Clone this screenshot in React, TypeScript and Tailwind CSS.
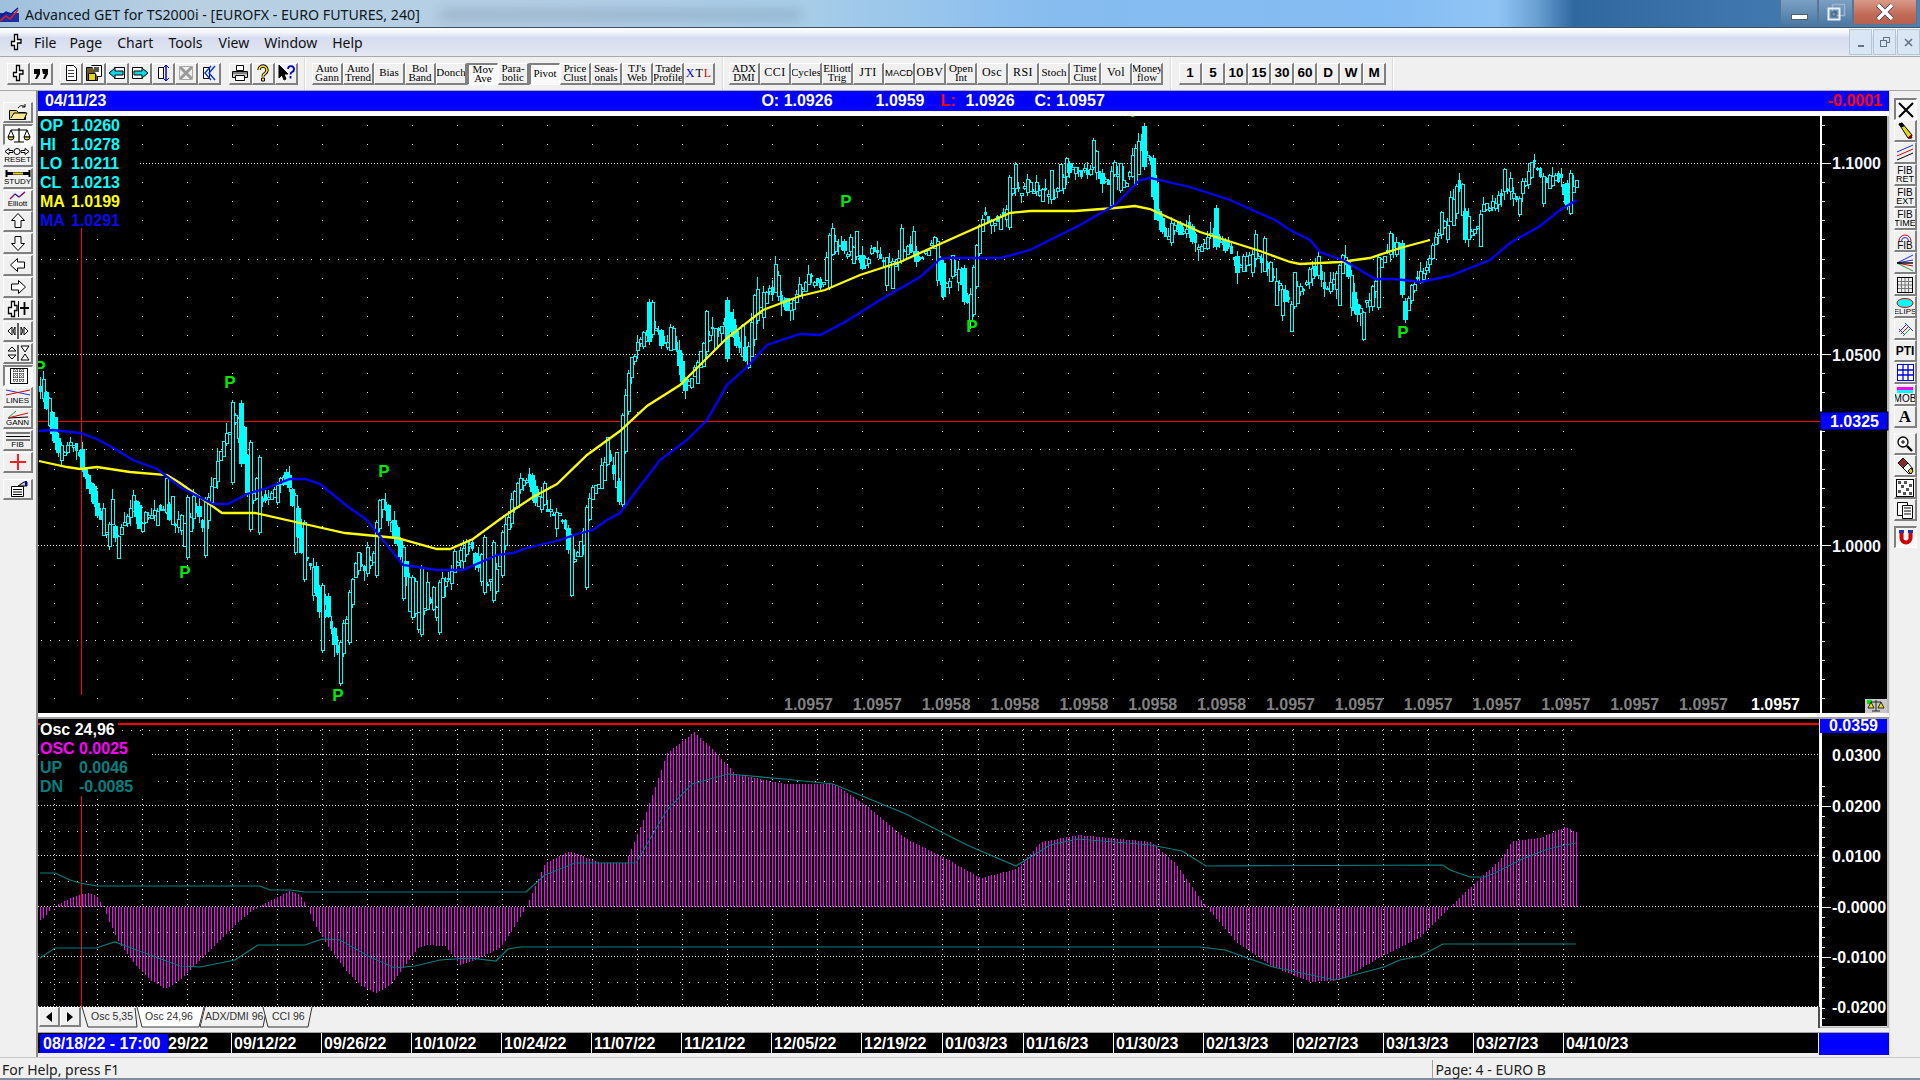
import React from "react";

type P = [number, number];

const K: P[] = [[40,385],[46,398],[51,415],[53,422],[55,437],[61,452],[71,443],[80,450],[83,462],[88,482],[93,493],[100,515],[106,540],[110,517],[118,537],[126,520],[136,498],[141,533],[146,517],[158,510],[166,503],[175,530],[181,515],[186,533],[196,497],[204,533],[211,490],[215,477],[223,443],[231,427],[241,413],[245,457],[250,497],[258,497],[268,500],[276,487],[286,473],[295,507],[303,550],[315,570],[321,617],[326,600],[331,627],[340,660],[343,627],[348,617],[353,577],[360,557],[366,570],[375,550],[381,497],[386,510],[395,530],[405,563],[411,600],[421,613],[430,600],[438,610],[443,583],[451,577],[461,557],[468,540],[476,557],[483,583],[491,580],[501,557],[513,500],[520,480],[530,473],[537,507],[540,493],[548,513],[558,513],[567,525],[573,567],[585,533],[592,493],[602,480],[607,457],[615,470],[620,493],[628,380],[633,358],[647,330],[657,327],[665,347],[677,348],[685,390],[693,380],[700,360],[710,330],[718,333],[728,317],[737,340],[748,360],[753,327],[767,290],[780,297],[790,307],[800,289],[810,279],[818,283],[825,283],[830,249],[838,243],[845,249],[855,254],[865,266],[873,249],[883,261],[893,268],[900,258],[908,248],[920,259],[927,249],[935,243],[942,279],[947,286],[953,271],[963,286],[970,309],[975,273],[978,243],[983,216],[990,223],[1000,216],[1007,213],[1010,196],[1017,189],[1027,189],[1035,188],[1040,196],[1045,191],[1053,198],[1060,188],[1068,163],[1073,173],[1080,171],[1088,173],[1093,163],[1098,173],[1108,183],[1115,171],[1123,188],[1128,179],[1133,163],[1142,133],[1143,149],[1152,163],[1155,189],[1158,216],[1162,229],[1168,239],[1177,226],[1182,233],[1187,223],[1195,243],[1202,253],[1208,236],[1215,233],[1225,246],[1233,253],[1240,271],[1245,259],[1260,258],[1268,271],[1277,283],[1283,291],[1288,303],[1295,299],[1298,286],[1307,284],[1312,266],[1320,276],[1327,286],[1333,286],[1340,269],[1343,256],[1348,263],[1352,293],[1357,311],[1363,308],[1372,301],[1377,276],[1383,256],[1388,249],[1393,246],[1402,243],[1405,316],[1412,286],[1420,276],[1427,269],[1432,249],[1438,229],[1447,226],[1453,221],[1457,184],[1462,184],[1465,226],[1470,234],[1477,229],[1482,213],[1488,206],[1495,204],[1502,193],[1507,183],[1510,193],[1518,196],[1523,188],[1528,176],[1533,161],[1538,169],[1543,179],[1548,184],[1552,176],[1558,178],[1563,181],[1567,196],[1568,208],[1573,186],[1577,180]];

// [x, top, bottom, filled]
const SPIKES: [number, number, number, number][] = [[186,495,560,0],[204,497,558,0],[231,400,485,0],[241,400,467,1],[250,440,532,0],[258,455,535,0],[294,493,555,0],[303,520,582,0],[321,583,653,0],[340,640,686,0],[348,590,645,0],[375,520,578,0],[402,545,601,0],[411,575,620,0],[420,565,637,0],[438,580,635,0],[483,535,595,0],[492,540,603,0],[501,530,578,0],[585,505,590,0],[622,413,507,0],[619,478,505,1],[648,299,345,1],[727,297,362,1],[828,233,290,0],[943,260,300,1],[963,265,305,1],[972,265,317,0],[1008,175,230,0],[1143,123,170,1],[1153,155,200,1],[1215,205,250,1],[1377,255,310,0],[1402,240,298,1],[1405,298,323,1],[1465,208,243,1],[1518,196,217,0],[1567,180,210,1]];

const YELLOW: P[] = [[39,461],[67,467],[80,469],[97,467],[130,472],[167,475],[180,483],[222,513],[255,513],[300,523],[345,533],[397,538],[437,549],[450,549],[473,539],[503,517],[533,497],[557,484],[587,455],[620,431],[647,406],[680,385],[700,365],[727,338],[763,310],[800,296],[825,290],[860,275],[900,262],[960,235],[1010,213],[1030,211],[1075,211],[1115,208],[1135,206],[1150,209],[1200,232],[1260,251],[1290,262],[1300,264],[1340,262],[1370,258],[1400,248],[1430,240]];
const BLUE: P[] = [[39,431],[53,430],[80,433],[97,439],[115,449],[133,460],[157,469],[170,479],[182,488],[213,504],[228,504],[247,494],[267,488],[290,479],[305,479],[320,484],[347,506],[367,520],[403,565],[437,570],[463,570],[497,555],[513,553],[527,548],[560,540],[577,534],[593,530],[607,520],[620,513],[637,490],[660,460],[687,440],[707,420],[727,385],[747,367],[767,345],[800,334],[820,335],[845,322],[880,300],[920,277],[940,259],[945,258],[1000,258],[1030,250],[1080,225],[1115,205],[1140,180],[1150,178],[1190,187],[1230,200],[1275,220],[1290,230],[1310,240],[1320,252],[1345,261],[1375,279],[1395,279],[1420,282],[1450,276],[1490,260],[1510,243],[1540,226],[1560,210],[1577,200]];

const OSC: P[] = [[40,920],[46,915],[52,907],[60,903],[70,898],[81,894],[90,893],[97,897],[102,905],[104,907],[108,920],[120,945],[135,965],[150,980],[165,989],[180,980],[195,965],[215,945],[235,925],[250,912],[262,905],[275,898],[290,891],[300,895],[307,907],[315,925],[330,950],[345,970],[360,985],[376,993],[390,985],[405,965],[418,948],[427,945],[445,946],[460,965],[475,960],[500,948],[512,930],[526,907],[545,863],[569,851],[600,863],[625,863],[643,820],[667,753],[694,732],[716,753],[735,774],[784,784],[833,784],[869,808],[906,839],[943,857],[980,878],[1016,869],[1041,842],[1078,835],[1151,842],[1175,863],[1206,907],[1237,943],[1273,967],[1310,982],[1341,980],[1384,955],[1420,937],[1445,912],[1457,900],[1482,876],[1500,860],[1512,841],[1540,838],[1565,827],[1576,832]];
const UP: P[] = [[40,873],[55,873],[70,880],[80,883],[97,886],[260,886],[270,890],[290,890],[305,892],[526,892],[545,875],[575,863],[636,863],[667,810],[692,784],[728,774],[784,779],[833,784],[906,814],[967,845],[1016,866],[1050,845],[1078,839],[1151,845],[1182,851],[1206,866],[1443,865],[1450,870],[1470,877],[1485,877],[1495,873],[1520,860],[1545,850],[1565,845],[1576,843]];
const DN: P[] = [[40,958],[55,948],[97,948],[105,945],[115,942],[150,955],[180,966],[200,967],[235,960],[258,945],[305,945],[322,939],[340,940],[370,957],[395,968],[415,966],[440,960],[470,958],[496,961],[508,949],[520,947],[1200,947],[1225,950],[1273,967],[1335,980],[1384,967],[1400,960],[1420,956],[1443,944],[1576,944]];

const GRIDX: number[] = [54];
for (let x = 97; x <= 906; x += 45) GRIDX.push(x);
GRIDX.push(942, 978);
for (let x = 1023; x <= 1563; x += 45) GRIDX.push(x);

function lerp(pts: P[], x: number): number {
  if (x <= pts[0][0]) return pts[0][1];
  for (let i = 1; i < pts.length; i++) {
    if (x <= pts[i][0]) {
      const [a, b] = pts[i - 1];
      const [c, d] = pts[i];
      return c === a ? d : b + ((d - b) * (x - a)) / (c - a);
    }
  }
  return pts[pts.length - 1][1];
}
const line = (pts: P[]) => pts.map((p) => p.join(",")).join(" ");

function buildCandles() {
  let seed = 20230411;
  const r = () => {
    seed = (seed * 1664525 + 1013904223) >>> 0;
    return seed / 4294967296;
  };
  let wick = "";
  let solid = "";
  let hollow = "";
  for (let x = 40; x <= 1576; x += 3) {
    const o = lerp(K, x - 2) + (r() - 0.5) * 11;
    const c = lerp(K, x + 2) + (r() - 0.5) * 11;
    let top = Math.round(Math.min(o, c));
    let bot = Math.round(Math.max(o, c));
    if (bot - top < 2) bot = top + 2;
    let filled = c > o;
    if (r() < 0.24) {
      const ext = 6 + Math.round(r() * 20);
      if (r() < 0.5) top -= ext;
      else bot += ext;
      filled = false;
    }
    let wt = Math.round(top - r() * r() * 14);
    let wb = Math.round(bot + r() * r() * 14);
    const s = SPIKES.find((q) => Math.abs(q[0] - x) <= 1);
    if (s) {
      wt = s[1];
      wb = s[2];
      filled = s[3] === 1;
      top = s[3] === 1 ? s[1] + 3 : s[1] + 2;
      bot = s[2] - 3;
    }
    wick += `M${x}.5 ${wt}V${wb}`;
    if (filled) {
      const big = bot - top >= 10;
      solid += big ? `M${x - 2} ${top}h5v${bot - top}h-5z` : `M${x - 1} ${top}h3v${bot - top}h-3z`;
    } else hollow += `M${x - 1}.5 ${top}.5h3v${bot - top}h-3z`;
  }
  return { wick, solid, hollow };
}
const CANDLES = buildCandles();

function oscBars() {
  let d = "";
  for (let x = 40; x <= 1576; x += 3) {
    const y = Math.round(lerp(OSC, x));
    d += `M${x}.5 907V${y}`;
  }
  return d;
}
const OSC_BARS = oscBars();

const dots = (xs: number[], y: number) => xs.map((x) => `M${x} ${y}h1`).join("");
function priceGrid() {
  let d = "";
  for (let k = -2; k <= 28; k++) {
    if (k % 5 === 0) continue;
    d += dots(GRIDX, Math.round(163 + k * 19.12));
  }
  return d;
}
const PRICE_GRID = priceGrid();

const DATES: [number, string][] = [[231,"09/12/22"],[321,"09/26/22"],[411,"10/10/22"],[501,"10/24/22"],[591,"11/07/22"],[681,"11/21/22"],[771,"12/05/22"],[861,"12/19/22"],[942,"01/03/23"],[1023,"01/16/23"],[1113,"01/30/23"],[1203,"02/13/23"],[1293,"02/27/23"],[1383,"03/13/23"],[1473,"03/27/23"],[1563,"04/10/23"]];
const CLOSES = ["1.0957","1.0957","1.0958","1.0958","1.0958","1.0958","1.0958","1.0957","1.0957","1.0957","1.0957","1.0957","1.0957","1.0957"];
const PIVOTS: P[] = [[40,367],[185,572],[230,382],[384,471],[338,695],[846,201],[972,326],[1136,111],[1403,332]];

function Btn({ w = "w-[31px]", h = "h-[22px]", pressed = false, children }: { w?: string; h?: string; pressed?: boolean; children?: React.ReactNode }) {
  return (
    <div className={`${w} ${h} shrink-0 flex items-center justify-center overflow-hidden text-black ${pressed ? "bg-[#f9f9f9] border-t-2 border-l-2 border-b border-r border-t-[#808080] border-l-[#808080] border-b-white border-r-white" : "bg-[#f0f0f0] border-t border-l border-b-2 border-r-2 border-t-white border-l-white border-b-[#808080] border-r-[#808080]"}`}>
      {children}
    </div>
  );
}

function Label({ a, b, cls = "" }: { a: string; b?: string; cls?: string }) {
  return (
    <div className={`font-['Liberation_Serif'] text-[11px] leading-[9.500px] text-center whitespace-nowrap ${cls}`}>
      <div>{a}</div>
      {b ? <div>{b}</div> : null}
    </div>
  );
}

function S({ children, w = 18, h = 18 }: { children: React.ReactNode; w?: number; h?: number }) {
  return (
    <svg width={w} height={h} viewBox={`0 0 ${w} ${h}`} fill="none" stroke="#000" strokeWidth={1} className="shrink-0">
      {children}
    </svg>
  );
}

const Pin = () => <path d="M7.500 1.500h3v5h3.500v3.500h-3.500v6.500h-3v-4h-3v-4h3z" fill="#fff" stroke="#000" strokeWidth="1.300" />;
const Doc = () => (
  <>
    <path d="M4.500 1.500h7l3 3v12h-10z" fill="#fff" />
    <path d="M6 6.500h6M6 9.500h6M6 12.500h6" stroke="#444" />
  </>
);
const Arrow = ({ d }: { d: string }) => <path d={d} fill="#fff" stroke="#000" />;

const TOP1: React.ReactNode[] = [
  <S key="a"><Pin /></S>,
  <S key="b"><path d="M2 5h6v5l-3 5H3l2-5H2zM10 5h6v5l-3 5h-2l2-5h-2z" fill="#000" stroke="none" /></S>,
];
const TOP2: React.ReactNode[] = [
  <S key="a"><Doc /></S>,
  <S key="b"><path d="M1.500 3.500h11v13h-11z" fill="#6b5b1d" /><path d="M3.500 9.500h7v7h-7z" fill="#e8d800" /><path d="M6.500 1.500h10v11h-4" fill="#fff" /><path d="M9 3h5v5H9z" fill="#555" stroke="none" /></S>,
  <S key="c"><path d="M6.500 3.500h10v11h-10z" fill="#fff" /><path d="M1 9l6-5v3h8v4H7v3z" fill="#00d8e8" /></S>,
  <S key="d"><path d="M1.500 3.500h10v11h-10z" fill="#fff" /><path d="M17 9l-6-5v3H3v4h8v3z" fill="#00d8e8" /></S>,
  <S key="e"><path d="M4.500 3.500h5v11h-5z" fill="#fff" /><path d="M12 1v16" stroke="#0000e0" strokeWidth="1.500" /><path d="M9 4l3-3 3 3M9 14l3 3 3-3" stroke="#0000e0" /></S>,
  <S key="f"><path d="M3 3l12 12M15 3L3 15" stroke="#9a9a9a" strokeWidth="3" /><path d="M2.500 2.500h13v13h-13z" stroke="#a8a8a8" /></S>,
  <S key="g"><path d="M3.500 3.500h6v11h-6z" fill="#fff" /><path d="M11 2L5 9l6 7M15 2L9 9l6 7" stroke="#0030e0" strokeWidth="1.400" /></S>,
];
const TOP3: React.ReactNode[] = [
  <S key="a"><path d="M5.500 1.500h7v5h-7z" fill="#fff" /><path d="M1.500 7.500h15v6h-15z" fill="#ccc" /><path d="M4.500 11.500h9v5h-9z" fill="#fff" /><path d="M2 9h14" stroke="#333" /></S>,
  <S key="b"><path d="M5 6a4 4 0 1 1 6 3.500c-1.500.8-2 1.500-2 3" stroke="#000" strokeWidth="3.400" /><path d="M5 6a4 4 0 1 1 6 3.500c-1.500.8-2 1.500-2 3" stroke="#ffe400" strokeWidth="1.600" /><path d="M7.500 14h3v3h-3z" fill="#ffe400" /></S>,
  <S key="c"><path d="M2 1v13l3-3 2 5 2-1-2-5h4z" fill="#000" /><path d="M11 5a3 3 0 1 1 4 3c-1 .5-1.500 1-1.500 2.500M13.500 12v2.500" stroke="#0000c8" strokeWidth="1.800" /></S>,
];

const AUTO: [string, string?, string?][] = [
  ["Auto","Gann"],["Auto","Trend"],["Bias"],["Bol","Band"],["Donch"],["Mov","Ave","p"],["Para-","bolic"],["Pivot",undefined,"p"],["Price","Clust"],["Seas-","onals"],["TJ's","Web"],["Trade","Profile"],
];
const STUDY: [string, string?, string?][] = [
  ["ADX","DMI"],["CCI"],["Cycles"],["Elliott","Trig"],["JTI"],["MACD"],["OBV"],["Open","Int"],["Osc"],["RSI"],["Stoch"],["Time","Clust"],["Vol"],["Money","flow"],
];

const Cap = ({ t }: { t: string }) => <div className="font-['Liberation_Sans'] text-[8px] leading-[8px] text-black whitespace-nowrap">{t}</div>;

const LEFT: { n: React.ReactNode; p?: boolean }[] = [
  { n: <S w={24}><path d="M3.500 7.500h7l2 2h7v7h-16z" fill="#e8d060" /><path d="M5 15l3-5h13l-3 6.500H4" fill="#f4e890" /><path d="M12 5c2-3 5-3 7-1M19 1v3h-3" stroke="#000" /></S> },
  { n: <S w={26}><path d="M13 2v14M5 4h16M8 16h10" stroke="#000" strokeWidth="1.200" /><path d="M5 4l-3 7h6zM21 4l-3 7h6z" fill="#fff" /><path d="M2 11a3 3 0 0 0 6 0zM18 11a3 3 0 0 0 6 0z" fill="#e8d800" /></S>, p: true },
  { n: <div className="flex flex-col items-center"><S w={26} h={9}><path d="M1 4.500l4-3v2h4v2H5v2zM25 4.500l-4-3v2h-4v2h4v2zM10 4.500a3 3 0 1 0 6 0a3 3 0 1 0-6 0" fill="#fff" /></S><Cap t="RESET" /></div> },
  { n: <div className="flex flex-col items-center"><S w={26} h={9}><path d="M1.500 1v7M24.500 1v7" stroke="#000" strokeWidth="2" /><path d="M2 4.500h22" stroke="#000" strokeWidth="3" /><path d="M8 4.500h10" stroke="#e8d800" strokeWidth="2" /></S><Cap t="STUDY" /></div> },
  { n: <div className="flex flex-col items-center"><S w={24} h={9}><path d="M4 8l5-5 4 3 6-5" stroke="#0000e0" strokeWidth="1.200" /><path d="M4 8l5-5M13 6l6-5" stroke="#e00000" strokeWidth="1" /></S><Cap t="Elliott" /></div> },
  { n: <S><Arrow d="M9 1.500l6.500 7h-3.500v7h-6v-7h-3.500z" /></S> },
  { n: <S><Arrow d="M9 16.500l6.500-7h-3.500v-7h-6v7h-3.500z" /></S> },
  { n: <S><Arrow d="M1.500 9l7-6.500v3.500h7v6h-7v3.500z" /></S> },
  { n: <S><Arrow d="M16.500 9l-7-6.500v3.500h-7v6h7v3.500z" /></S> },
  { n: <S w={26}><path d="M6.500 1.500h3v4h2.500v5h-2.500v6h-3v-3h-3v-6h3z" fill="#fff" strokeWidth="1.300" /><path d="M13.500 1v16" /><path d="M19.500 2v13M15 8h9" strokeWidth="1.800" /></S> },
  { n: <S w={26}><path d="M13 1v16" strokeWidth="1.200" /><path d="M3 9l4-4v8zM10 5v8l-2-4zM23 9l-4-4v8zM16 5v8l2-4z" fill="#fff" /></S> },
  { n: <S w={26}><path d="M13 1v16" strokeWidth="1.200" /><path d="M3 7l4-4 4 4zM3 11l4 4 4-4z" fill="#fff" /><path d="M16 2h8l-4 6zM16 16h8l-4-6z" fill="#fff" /></S> },
  { n: <svg width="20" height="18" viewBox="0 0 20 18"><rect x="1.500" y="1.500" width="17" height="15" fill="#fff" stroke="#000" /><path d="M4 4h12M4 7h12M4 10h12M4 13h12M5 2v14M8 2v14M11 2v14M14 2v14" stroke="#000" strokeDasharray="1 1" /></svg>, p: true },
  { n: <div className="flex flex-col items-center"><S w={26} h={9}><path d="M1 2l24 5" stroke="#2030e0" /><path d="M1 7l24-5" stroke="#e00000" /></S><Cap t="LINES" /></div> },
  { n: <div className="flex flex-col items-center"><S w={26} h={9}><path d="M3 8l20-1" stroke="#000" strokeWidth="1.200" /><path d="M3 8l20-5" stroke="#e00000" /><path d="M3 8l8-7" stroke="#20a040" /></S><Cap t="GANN" /></div> },
  { n: <div className="flex flex-col items-center"><S w={26} h={9}><path d="M1 1h24M1 4.500h24M1 8h24" strokeWidth="1.200" /></S><Cap t="FIB" /></div> },
  { n: <S><path d="M9 1v16M1 9h16" stroke="#ff2020" strokeWidth="2" /></S> },
];

const FibCap = ({ a, b }: { a: string; b?: string }) => (
  <div className="font-['Liberation_Sans'] text-[10px] leading-[9px] text-center text-black whitespace-nowrap">
    <div>{a}</div>
    {b ? <div className="text-[9px]">{b}</div> : null}
  </div>
);
const RIGHT_A: { n: React.ReactNode; p?: boolean }[] = [
  { n: <S><path d="M2 2l14 14M16 2L2 16" strokeWidth="2" /></S>, p: true },
  { n: <S><path d="M3 2l3-1 10 12-1 3-3 0z" fill="#e8d800" /><path d="M3 2l3-1 2 3-3 1z" fill="#000" /><path d="M12 16l3-3 1 3z" fill="#800000" stroke="#800000" /></S> },
  { n: <S><path d="M1 8l16-7" stroke="#2030e0" /><path d="M1 12l16-7" stroke="#e00000" /><path d="M1 16l16-7" stroke="#000" /></S> },
  { n: <FibCap a="FIB" b="RET" /> },
  { n: <FibCap a="FIB" b="EXT" /> },
  { n: <FibCap a="FIB" b="TIME" /> },
  { n: <div className="flex flex-col items-center"><S h={9}><path d="M3 9a6 6 0 0 1 12 0" stroke="#e00000" /><path d="M5.500 9a3.500 3.500 0 0 1 7 0" stroke="#2030e0" /></S><FibCap a="FIB" /></div> },
  { n: <S><path d="M1 9l16-8M1 9l16-3" stroke="#2030e0" /><path d="M1 9l16 3" stroke="#e00000" /><path d="M1 9l16 8" stroke="#20a040" /><path d="M1 9h16" stroke="#000" strokeWidth="1.400" /></S> },
  { n: <svg width="16" height="16" viewBox="0 0 16 16"><rect x=".5" y=".5" width="15" height="15" fill="#eee" stroke="#000" /><path d="M4.500 1v14M8 1v14M11.500 1v14M1 4.500h14M1 8h14M1 11.500h14" stroke="#777" /></svg> },
  { n: <div className="flex flex-col items-center"><svg width="18" height="10" viewBox="0 0 18 10"><ellipse cx="9" cy="5" rx="8" ry="4.500" fill="#00ffff" stroke="#e00000" /></svg><Cap t="ELIPS" /></div> },
  { n: <S><path d="M3 12l8-8" stroke="#2030e0" /><path d="M5 14l8-8" stroke="#e00000" /><path d="M7 16l8-8" stroke="#20a040" /><path d="M9 3l8 8M3 9l6 6" stroke="#2030e0" /></S> },
  { n: <div className="font-['Liberation_Sans'] font-bold text-[12px] leading-none text-black">PTI</div> },
  { n: <svg width="17" height="17" viewBox="0 0 17 17"><rect x=".5" y=".5" width="16" height="16" fill="#fff" stroke="#0000e0" /><path d="M6 1v15M11 1v15M1 6h15M1 11h15" stroke="#0000e0" strokeWidth="1.300" /></svg> },
  { n: <div className="flex flex-col items-center w-full"><div className="h-[3px] w-[16px] bg-[#ff00ff]" /><div className="h-[3px] w-[16px] bg-[#00ffff] mb-[1px]" /><FibCap a="MOB" /></div> },
  { n: <div className="font-['Liberation_Serif'] font-bold text-[17px] leading-none text-black">A</div> },
];
const RIGHT_B: React.ReactNode[] = [
  <S key="a"><circle cx="7" cy="7" r="5" fill="#fff" strokeWidth="1.300" /><path d="M5 7h4M7 5v4" /><path d="M11 11l5 5" strokeWidth="2.400" /></S>,
  <S key="b"><path d="M2 6l5-5 5 5-5 5z" fill="#8a2a2a" /><path d="M7 11l5-5 5 6-4 5z" fill="#fff" /><path d="M12 14l3-3 2 3-2 3z" fill="#e8d800" /></S>,
  <svg key="c" width="18" height="18" viewBox="0 0 18 18"><rect x=".5" y=".5" width="17" height="17" fill="#fff" stroke="#000" /><path d="M2 2h3v3H2zM8 2h3v3H8zM13 5h3v3h-3zM5 6h3v3H5zM10 9h3v3h-3zM2 11h3v3H2zM7 13h3v3H7zM13 13h3v3h-3z" fill="#555" /></svg>,
  <S key="d"><path d="M1.500 1.500h10v13h-10z" fill="#fff" /><path d="M6.500 4.500h10v13h-10z" fill="#fff" /><path d="M8 7h7M8 10h7M8 13h7" /></S>,
];

const GroupTop = ({ items }: { items: React.ReactNode[] }) => (
  <div className="flex">
    {items.map((n, i) => (
      <Btn key={i} w="w-[23px]">{n}</Btn>
    ))}
  </div>
);

function WinBtn({ w, cls, children }: { w: string; cls: string; children: React.ReactNode }) {
  return <div className={`${w} h-[25px] flex items-center justify-center border border-[#5b7590] border-t-0 ${cls}`}>{children}</div>;
}
function MdiBtn({ children }: { children: React.ReactNode }) {
  return <div className="w-[23px] h-[26px] ml-[1px] flex items-center justify-center bg-[#dbe6f4] border border-[#b4c6da]">{children}</div>;
}

const F = "Liberation Sans";

function PriceChart() {
  return (
    <svg width="1782" height="597" viewBox="38 116 1782 597" className="shrink-0 block bg-black">
      <path d={PRICE_GRID} stroke="#e8e8e8" strokeWidth="1" shapeRendering="crispEdges" />
      {[163, 354, 545].map((y) => (
        <path key={y} d={`M38 ${y}.5H1820`} stroke="#e8e8e8" strokeDasharray="1 2" shapeRendering="crispEdges" />
      ))}
      {[259, 449, 640].map((y) => (
        <path key={y} d={`M41 ${y}.5H1574`} stroke="#e8e8e8" strokeDasharray="1 8" shapeRendering="crispEdges" />
      ))}
      <path d="M38 421.500H1820" stroke="#ff0000" shapeRendering="crispEdges" />
      <path d="M81.500 228V695" stroke="#ff0000" shapeRendering="crispEdges" />
      <path d={CANDLES.wick} stroke="#00ffff" shapeRendering="crispEdges" />
      <path d={CANDLES.hollow} stroke="#00ffff" fill="#000" shapeRendering="crispEdges" />
      <path d={CANDLES.solid} fill="#00ffff" shapeRendering="crispEdges" />
      <polyline points={line(YELLOW)} fill="none" stroke="#ffff00" strokeWidth="2.300" />
      <polyline points={line(BLUE)} fill="none" stroke="#0000ff" strokeWidth="2.300" />
      <g fontFamily={F} fontWeight="bold" fontSize="17" fill="#00e800" textAnchor="middle">
        {PIVOTS.map(([x, y]) => (
          <text key={x} x={x} y={y + 6}>P</text>
        ))}
      </g>
      <g fontFamily={F} fontWeight="bold" fontSize="16" fill="#808080">
        {CLOSES.map((t, i) => (
          <text key={i} x={784 + i * 68.85} y={710}>{t}</text>
        ))}
        <text x={1751} y={710} fill="#ffffff">1.0957</text>
      </g>
    </svg>
  );
}

function PriceAxis() {
  const minor: number[] = [];
  for (let k = -2; k <= 28; k++) minor.push(Math.round(163 + k * 19.12));
  return (
    <svg width="69" height="597" viewBox="1820 116 69 597" className="shrink-0 block bg-black">
      <path d="M1821 116V713" stroke="#fff" strokeWidth="2" />
      {minor.map((y) => (
        <path key={y} d={`M1822 ${y}.5h${y === 163 || y === 354 || y === 545 ? 9 : 3}`} stroke="#fff" shapeRendering="crispEdges" />
      ))}
      <path d="M1888 116V713" stroke="#b8b8b8" strokeWidth="2" />
      <g fontFamily={F} fontWeight="bold" fontSize="16" fill="#f2f6ff">
        <text x="1832" y="169">1.1000</text>
        <text x="1832" y="361">1.0500</text>
        <text x="1832" y="552">1.0000</text>
      </g>
      <rect x="1820" y="412" width="68" height="18" fill="#0000ff" stroke="#000" />
      <text x="1830" y="427" fontFamily={F} fontWeight="bold" fontSize="16" fill="#fff">1.0325</text>
      <g>
        <rect x="1865" y="699" width="22" height="14" fill="#c8c8c8" />
        <rect x="1867" y="700" width="5" height="4" fill="#00e000" />
        <path d="M1876 700v11M1871 702h10M1871 702l-3 6h6zM1881 702l-3 6h6zM1872 711h8" stroke="#222" fill="#e8e800" />
      </g>
    </svg>
  );
}

function OscChart() {
  return (
    <svg width="1781" height="288" viewBox="38 719 1781 288" className="block bg-black">
      {GRIDX.map((x) => (
        <path key={x} d={`M${x}.5 724V1007`} stroke="#dcdcdc" strokeDasharray="1 4" shapeRendering="crispEdges" />
      ))}
      {[754, 805, 855, 906, 956, 1006].map((y) => (
        <path key={y} d={`M38 ${y}.5H1819`} stroke="#dcdcdc" strokeDasharray="1 2" shapeRendering="crispEdges" />
      ))}
      {[730, 781, 831, 881, 932, 982].map((y) => (
        <path key={y} d={`M41 ${y}.5H1574`} stroke="#dcdcdc" strokeDasharray="1 8" shapeRendering="crispEdges" />
      ))}
      <path d="M38 724H1819" stroke="#ff0000" strokeWidth="2" shapeRendering="crispEdges" />
      <path d="M81.500 724V1007" stroke="#ff0000" shapeRendering="crispEdges" />
      <path d={OSC_BARS} stroke="#ff00ff" shapeRendering="crispEdges" />
      <polyline points={line(UP)} fill="none" stroke="#008080" strokeWidth="1.200" />
      <polyline points={line(DN)} fill="none" stroke="#008080" strokeWidth="1.200" />
    </svg>
  );
}

function OscAxis() {
  const ticks: number[] = [];
  for (let k = -12; k <= 16; k++) ticks.push(Math.round(907 + k * 10.06));
  const major = [755, 806, 856, 907, 957, 1007];
  const labels: [number, string][] = [[761, "0.0300"], [812, "0.0200"], [862, "0.0100"], [913, "-0.0000"], [963, "-0.0100"], [1013, "-0.0200"]];
  return (
    <svg width="69" height="309" viewBox="1820 719 69 309" className="shrink-0 block bg-black">
      <path d="M1821 719V1026" stroke="#fff" strokeWidth="2" />
      {ticks.map((y) => (
        <path key={y} d={`M1822 ${y}.5h${major.indexOf(y) >= 0 ? 9 : 3}`} stroke="#fff" shapeRendering="crispEdges" />
      ))}
      <g fontFamily={F} fontWeight="bold" fontSize="16" fill="#fff">
        {labels.map(([y, t]) => (
          <text key={t} x="1832" y={y}>{t}</text>
        ))}
      </g>
      <rect x="1820" y="719" width="69" height="14" fill="#0000ff" />
      <text x="1829" y="731" fontFamily={F} fontWeight="bold" fontSize="16" fill="#fff">0.0359</text>
      <path d="M1820 1026.500H1888" stroke="#fff" />
      <path d="M1888 719V1028M1820 1027.500H1889" stroke="#b8b8b8" strokeWidth="2" />
    </svg>
  );
}

function TabStrip() {
  return (
    <svg width="1781" height="21" viewBox="0 0 1781 21" className="block">
      <g fill="none" stroke="#333" strokeWidth="1">
        <polyline points="44,0 50,20 99,20 97,1" fill="#f0f0f0" />
        <polyline points="167,0 162,20 225,20 229,0" fill="#f0f0f0" />
        <polyline points="225,0 230,20 270,20 274,0" fill="#f0f0f0" />
        <polygon points="99,0 104,20 161,20 166,0" fill="#fff" stroke="#fff" />
        <polyline points="99,0 104,20 161,20 166,0" />
      </g>
      <g fontFamily={F} fontSize="10.500" fill="#303030">
        <text x="53" y="13">Osc 5,35</text>
        <text x="107" y="13">Osc 24,96</text>
        <text x="167" y="13">ADX/DMI 96</text>
        <text x="234" y="13">CCI 96</text>
      </g>
    </svg>
  );
}

function DateBar() {
  return (
    <svg width="1780" height="20" viewBox="38 1034 1780 20" className="block bg-black">
      <g fontFamily={F} fontWeight="bold" fontSize="16" fill="#fff">
        {DATES.map(([x, t]) => (
          <React.Fragment key={t}>
            <path d={`M${x}.5 1034V1054`} stroke="#fff" strokeWidth="1" shapeRendering="crispEdges" />
            <text x={x + 3} y="1050">{t}</text>
          </React.Fragment>
        ))}
        <text x="168" y="1050">29/22</text>
      </g>
      <rect x="40" y="1035" width="128" height="19" fill="#0000ff" />
      <text x="43" y="1050" fontFamily={F} fontWeight="bold" fontSize="16" fill="#fff">08/18/22 - 17:00</text>
    </svg>
  );
}

export default function App() {
  return (
    <div className="w-[1920px] h-[1080px] overflow-hidden flex flex-col bg-[#f0f0f0] font-['Liberation_Sans',sans-serif]">
      {/* Title bar */}
      <div className="relative h-[28px] shrink-0 flex items-start bg-[linear-gradient(90deg,#9fc0dd_0%,#b9d0e2_10%,#b2cee6_30%,#a7cde8_42%,#86bcf0_55%,#84bdf3_72%,#90c4f5_78%,#6aa2d4_80%,#2f689f_82%,#3d75ac_90%,#4a82b6_100%)] border-b border-[#3f4f60]">
        <div className="absolute left-[440px] top-[10px] w-[360px] h-[10px] bg-[#5d7186]/30 blur-[6px]" />
        <svg width="20" height="16" viewBox="0 0 20 16" className="relative mt-[7px] shrink-0">
          <rect x="0" y="6" width="19" height="9" fill="#1c2f9c" />
          <path d="M0 14l6-5 4 3 8-9" stroke="#e02020" strokeWidth="1.500" fill="none" />
          <path d="M0 10l6-5 5 2 7-6" stroke="#0a1a90" strokeWidth="1.500" fill="none" />
        </svg>
        <div className="relative ml-[5px] mt-[5px] font-['Noto_Sans'] text-[14.2px] leading-[20px] text-[#101820] whitespace-nowrap">Advanced GET for TS2000i - [EUROFX - EURO FUTURES, 240]</div>
        <div className="relative ml-auto mr-[3px] flex">
          <WinBtn w="w-[38px]" cls="rounded-bl-[4px] bg-[linear-gradient(180deg,#7aa0c2,#4d7ba6)]"><div className="w-[17px] h-[6px] mt-[9px] bg-white border border-[#506070]" /></WinBtn>
          <WinBtn w="w-[35px]" cls="bg-[linear-gradient(180deg,#7aa0c2,#4d7ba6)]">
            <svg width="20" height="18" viewBox="0 0 20 18" fill="none" stroke="#e8f0f8"><rect x="6.500" y="1.500" width="12" height="11" strokeWidth="1.500" stroke="#9fb4c8" /><rect x="2.500" y="5.500" width="11" height="11" strokeWidth="2" /><rect x="6" y="9" width="4" height="4" stroke="#405060" /></svg>
          </WinBtn>
          <WinBtn w="w-[64px]" cls="rounded-br-[4px] bg-[linear-gradient(180deg,#d99a88,#c26a58_60%,#b8604e)]">
            <svg width="20" height="18" viewBox="0 0 20 18"><path d="M3 2l14 14M17 2L3 16" stroke="#3c4650" strokeWidth="5" /><path d="M3 2l14 14M17 2L3 16" stroke="#fff" strokeWidth="3.400" /></svg>
          </WinBtn>
        </div>
      </div>

      {/* Menu bar */}
      <div className="h-[29px] shrink-0 flex items-center bg-[linear-gradient(180deg,#ffffff_0%,#f4f6fa_15%,#d6ddef_35%,#dfe4f1_80%,#e6eaf4_100%)] border-b border-[#a8a8a8]">
        <svg width="18" height="18" viewBox="0 0 18 18" className="ml-[7px] shrink-0" fill="none"><Pin /></svg>
        <div className="flex ml-[9px] pt-[1px] font-['Noto_Sans'] text-[14px] text-[#101010]">
          <span>File</span>
          <span className="ml-[13px]">Page</span>
          <span className="ml-[15px]">Chart</span>
          <span className="ml-[15px]">Tools</span>
          <span className="ml-[16px]">View</span>
          <span className="ml-[15px]">Window</span>
          <span className="ml-[15px]">Help</span>
        </div>
        <div className="ml-auto flex pr-0">
          <MdiBtn><div className="w-[6px] h-[2px] mt-[8px] bg-[#5f7386]" /></MdiBtn>
          <MdiBtn>
            <svg width="10" height="10" viewBox="0 0 10 10" fill="none" stroke="#5f7386"><rect x="3.500" y=".5" width="6" height="5" /><rect x=".5" y="3.500" width="6" height="6" fill="#dbe6f4" /></svg>
          </MdiBtn>
          <MdiBtn>
            <svg width="9" height="9" viewBox="0 0 9 9"><path d="M1 1l7 7M8 1L1 8" stroke="#5f7386" strokeWidth="1.600" /></svg>
          </MdiBtn>
        </div>
      </div>

      {/* Toolbar */}
      <div className="h-[34px] shrink-0 flex items-center bg-[#f0f0f0] border-b border-[#a8a8a8]">
        <div className="ml-[7px]"><GroupTop items={TOP1} /></div>
        <div className="ml-[7px]"><GroupTop items={TOP2} /></div>
        <div className="ml-[8px]"><GroupTop items={TOP3} /></div>
        <div className="ml-[6px] w-[2px] h-[33px] bg-[#dcdcdc] border-r border-[#fff]" />
        <div className="ml-[6px] flex">
          {AUTO.map(([a, b, p]) => (
            <Btn key={a} pressed={p === "p"}><Label a={a} b={b} /></Btn>
          ))}
          <Btn>
            <div className="font-['Liberation_Serif'] text-[12px] tracking-[1px]"><span className="text-[#0000e0]">X</span><span>T</span><span className="text-[#e00000]">L</span></div>
          </Btn>
        </div>
        <div className="ml-[7px] w-[2px] h-[33px] bg-[#dcdcdc] border-r border-[#fff]" />
        <div className="ml-[5px] flex">
          {STUDY.map(([a, b]) => (
            <Btn key={a}>
              {a === "MACD" ? <div className="font-['Liberation_Sans'] text-[9.500px]">MACD</div> : <Label a={a} b={b} cls={b ? "" : a === "Stoch" || a === "Cycles" ? "" : "text-[12px] tracking-[0.5px]"} />}
            </Btn>
          ))}
        </div>
        <div className="ml-[7px] w-[2px] h-[33px] bg-[#dcdcdc] border-r border-[#fff]" />
        <div className="ml-[7px] flex">
          {["1", "5", "10", "15", "30", "60", "D", "W", "M"].map((t) => (
            <Btn key={t} w="w-[23px]"><span className="font-['Liberation_Sans'] font-bold text-[13.500px]">{t}</span></Btn>
          ))}
        </div>
        <div className="ml-[6px] w-[2px] h-[33px] bg-[#dcdcdc] border-r border-[#fff]" />
      </div>

      {/* Body */}
      <div className="flex-1 min-h-0 flex">
        {/* Left tools */}
        <div className="w-[38px] shrink-0 bg-[#f0f0f0] border-r-2 border-[#8c8c8c] pt-[11px] pl-[3px]">
          <div className="flex flex-col gap-[0.9px]">
            {LEFT.map((b, i) => (
              <Btn key={i} w="w-[30px]" h="h-[21px]" pressed={b.p}>{b.n}</Btn>
            ))}
          </div>
          <div className="mt-[6px]">
            <Btn w="w-[30px]" h="h-[21px]">
              <S w={24}><path d="M5.500 6.500h12v10h-12z" fill="#fff" /><path d="M7 9.500h9M7 12h9M7 14.500h9" /><path d="M12 6l6-4h3v4z" fill="#c8c8c8" /><path d="M20 1v5" stroke="#0000c0" strokeWidth="2" /></S>
            </Btn>
          </div>
        </div>

        {/* Centre */}
        <div className="w-[1851px] shrink-0 flex flex-col">
          <div className="h-[20px] shrink-0 bg-[#0000ff] relative flex items-center font-bold text-[16px] leading-[20px] text-white">
            <span className="ml-[7px]">04/11/23</span>
            <span className="ml-[655px]">O: 1.0926</span>
            <span className="ml-[43px]">1.0959</span>
            <span className="ml-[16px] text-[#ff0000]">L:</span>
            <span className="ml-[10px]">1.0926</span>
            <span className="ml-[20px]">C: 1.0957</span>
            <span className="ml-auto mr-[7px] text-[#ff0000]">-0.0001</span>
          </div>
          <div className="h-[5px] shrink-0 bg-white" />
          <div className="h-[597px] shrink-0 flex relative">
            <PriceChart />
            <PriceAxis />
            <div className="absolute left-0 top-0 w-[100px] h-[112px] bg-black pl-[2px] font-bold text-[16px] leading-[19px] text-[#00ffff]">
              {[["OP", "1.0260"], ["HI", "1.0278"], ["LO", "1.0211"], ["CL", "1.0213"]].map(([a, b]) => (
                <div key={a} className="flex"><span className="w-[31px]">{a}</span><span>{b}</span></div>
              ))}
              <div className="flex text-[#ffff00]"><span className="w-[31px]">MA</span><span>1.0199</span></div>
              <div className="flex text-[#0a0af0]"><span className="w-[31px]">MA</span><span>1.0291</span></div>
            </div>
          </div>
          <div className="h-[6px] shrink-0 bg-white border-b-2 border-[#a0a0a0]" />
          <div className="h-[309px] shrink-0 flex relative">
            <div className="w-[1782px] shrink-0 flex flex-col">
              <OscChart />
              <div className="h-[21px] relative flex border-r-2 border-[#505050]">
                <div className="flex pl-[1px]">
                  <Btn w="w-[21px]" h="h-[20px]"><svg width="8" height="10" viewBox="0 0 8 10"><path d="M7 0v10L1 5z" fill="#000" /></svg></Btn>
                  <Btn w="w-[21px]" h="h-[20px]"><svg width="8" height="10" viewBox="0 0 8 10"><path d="M1 0v10l6-5z" fill="#000" /></svg></Btn>
                </div>
                <div className="absolute left-0 top-0 pointer-events-none"><TabStrip /></div>
              </div>
            </div>
            <OscAxis />
            <div className="absolute left-0 top-0 pl-[2px] pt-[1px] font-bold text-[16px] leading-[19px]">
              <div className="w-[78px] bg-black text-white">Osc 24,96</div>
              <div className="w-[110px] flex bg-black text-[#ff00ff]"><span className="w-[39px]">OSC</span><span>0.0025</span></div>
              <div className="w-[110px] flex bg-black text-[#008080]"><span className="w-[39px]">UP</span><span>0.0046</span></div>
              <div className="w-[110px] flex bg-black text-[#008080]"><span className="w-[39px]">DN</span><span>-0.0085</span></div>
            </div>
          </div>
          <div className="h-[5px] shrink-0 bg-[#f0f0f0] border-b border-[#a0a0a0]" />
          <div className="h-[22px] shrink-0 flex items-start">
            <DateBar />
            <div className="ml-[1px] w-[70px] h-[22px] bg-[#0000ff]" />
          </div>
        </div>

        {/* Right tools */}
        <div className="flex-1 bg-[#f0f0f0] border-l border-[#e0e0e0] pl-[4px] pt-[7px]">
          {RIGHT_A.map((b, i) => (
            <Btn key={i} w="w-[23px]" h="h-[22px]" pressed={b.p}>{b.n}</Btn>
          ))}
          <div className="mt-[5px]">
            {RIGHT_B.map((n, i) => (
              <Btn key={i} w="w-[23px]" h="h-[22px]">{n}</Btn>
            ))}
          </div>
          <div className="mt-[5px]">
            <Btn w="w-[23px]" h="h-[22px]" pressed>
              <svg width="14" height="15" viewBox="0 0 14 15" fill="none"><path d="M2.500 0v8a4.500 4.500 0 0 0 9 0V0" stroke="#d00000" strokeWidth="4" /><path d="M0 0h5v3H0zM9 0h5v3H9z" fill="#2030c0" /></svg>
            </Btn>
          </div>
        </div>
      </div>

      {/* Status bar */}
      <div className="h-[23px] shrink-0 flex items-center pt-[2px] bg-[#f0f0f0] border-t border-[#c8c8c8] border-b-2 border-b-[#7d8ea0] font-['Noto_Sans'] text-[14px] text-[#202020]">
        <span className="ml-[2px]">For Help, press F1</span>
        <span className="ml-[1313px] pl-[2px] border-l border-[#a0a0a0] h-full flex items-center">Page: 4 - EURO B</span>
      </div>
    </div>
  );
}
